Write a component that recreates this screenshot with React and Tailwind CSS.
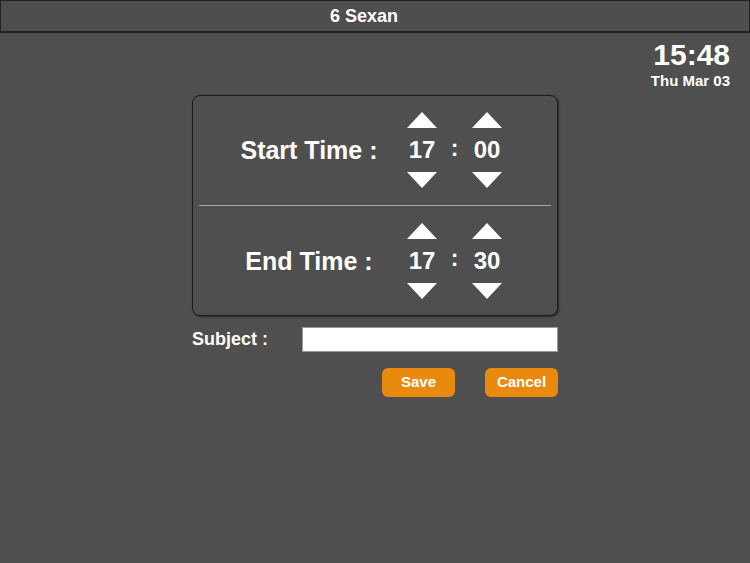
const Up = () => (
  <svg width="30" height="16" viewBox="0 0 30 16" className="block">
    <polygon points="15,0 30,16 0,16" fill="#ffffff" />
  </svg>
);

const Down = () => (
  <svg width="30" height="16" viewBox="0 0 30 16" className="block">
    <polygon points="0,0 30,0 15,16" fill="#ffffff" />
  </svg>
);

const Spinner = ({ value }) => (
  <div className="flex w-[30px] flex-col items-center">
    <Up />
    <div className="my-[8px] h-[28px] text-[24px] leading-[28px] font-bold whitespace-nowrap">
      {value}
    </div>
    <Down />
  </div>
);

const TimeRow = ({ label, hour, minute }) => (
  <div className="flex flex-1 items-center pl-[36px]">
    <div className="w-[160px] text-center text-[25px] leading-[30px] font-bold whitespace-nowrap">
      {label}
    </div>
    <div className="ml-[18px] flex items-center">
      <Spinner value={hour} />
      <div className="mb-[5px] w-[35px] text-center text-[23px] font-bold">:</div>
      <Spinner value={minute} />
    </div>
  </div>
);

export default function App() {
  return (
    <div
      className="flex min-h-[563px] w-full flex-col bg-[#4f4f4f] text-white"
      style={{ fontFamily: '"Liberation Sans", Arial, sans-serif' }}
    >
      <div className="flex h-[33px] items-center justify-center border border-b-2 border-[#222222] bg-[#4e4e4e] pr-[22px] text-[18px] font-bold">
        6 Sexan
      </div>

      <div className="flex flex-col items-end pt-[7px] pr-[20px]">
        <div className="text-[30px] leading-[30px] font-bold">15:48</div>
        <div className="mt-[2px] text-[15px] leading-[18px] font-bold">Thu Mar 03</div>
      </div>

      <div className="mx-auto mt-[5px] flex w-[366px] flex-col">
        <div className="flex h-[221px] flex-col rounded-[8px] border-[1.5px] border-[#1c1c1c] bg-[#4f4f4f] shadow-[1px_1px_2px_rgba(0,0,0,0.5)]">
          <TimeRow label="Start Time :" hour="17" minute="00" />
          <div className="mx-[6px] h-[1.5px] bg-[#a9a9a9]" />
          <TimeRow label="End Time :" hour="17" minute="30" />
        </div>

        <div className="mt-[10px] flex items-center justify-between">
          <span className="text-[18px] font-bold">Subject :</span>
          <input
            type="text"
            className="h-[25px] w-[256px] border border-[#9a9a9a] bg-white px-1 text-black outline-none"
          />
        </div>

        <div className="mt-[15px] flex justify-end gap-[30px]">
          <button className="h-[29px] w-[73px] rounded-[6px] bg-[#e9890d] text-[15px] font-bold text-white">
            Save
          </button>
          <button className="h-[29px] w-[73px] rounded-[6px] bg-[#e9890d] text-[15px] font-bold text-white">
            Cancel
          </button>
        </div>
      </div>
    </div>
  );
}
